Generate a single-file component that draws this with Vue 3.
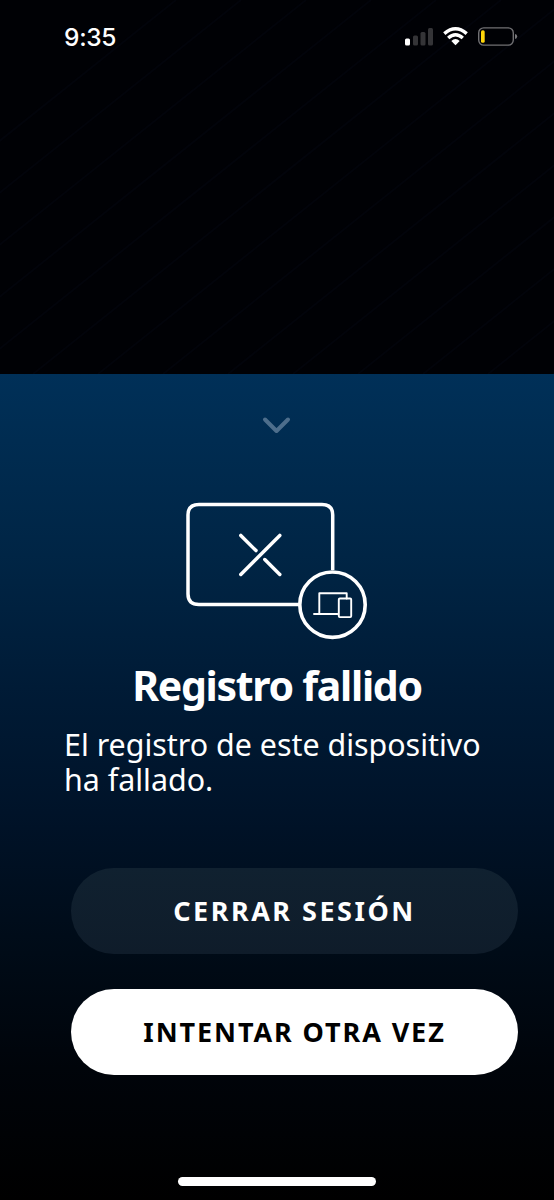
<script setup>
const stripes = Array.from({ length: 17 }, (_, i) => -292 + i * 65)
</script>

<template>
  <main class="screen">
    <section class="backdrop">
      <svg class="stripes" viewBox="0 0 554 374" aria-hidden="true">
        <path v-for="x in stripes" :key="x" :d="`M${x} 374L${x + 468} 0`" />
      </svg>
      <header class="status">
        <span class="time">9:35</span>
        <svg class="signals" width="114" height="22" viewBox="0 0 114 22" aria-hidden="true">
          <rect x="1" y="12.5" width="5" height="7" rx="1.5" fill="#fff" />
          <rect x="9" y="9.5" width="5" height="10" rx="1.5" fill="#343437" />
          <rect x="16.5" y="6" width="5" height="13.5" rx="1.5" fill="#343437" />
          <rect x="24" y="2" width="5" height="17.5" rx="1.5" fill="#343437" />
          <g fill="none" stroke="#fff" stroke-width="3.4">
            <path d="M40.3 7.6Q51.5-2.2 62.7 7.6" />
            <path d="M44.2 12Q51.5 5.5 58.8 12" />
          </g>
          <path d="M47.3 15Q51.5 11.2 55.7 15L51.5 19.2Z" fill="#fff" />
          <rect x="74.7" y="1.9" width="34.6" height="17.2" rx="5" fill="none" stroke="#707073" stroke-width="1.4" />
          <rect x="77" y="4.2" width="3.7" height="12.6" rx="1.6" fill="#ffd60a" />
          <path d="M111 8Q113.2 8.4 113.2 10.5Q113.2 12.6 111 13Z" fill="#77777a" />
        </svg>
      </header>
    </section>

    <section class="sheet">
      <svg class="chevron" width="30" height="20" viewBox="0 0 30 20" aria-label="Cerrar">
        <path d="M3 4.5L14.5 16L26 4.5" />
      </svg>
      <svg class="device" width="184" height="140" viewBox="0 0 184 140" aria-hidden="true">
        <g fill="none" stroke="#fff" stroke-linecap="round" stroke-linejoin="round">
          <path d="M114 104.6H14Q3 104.6 3 94.1V15Q3 4.4 14 4.4H137Q147.7 4.4 147.7 15V70" stroke-width="3.5" stroke-linecap="butt" />
          <circle cx="147.5" cy="104.7" r="32.7" stroke-width="3.6" />
          <path d="M55.8 74.4L94.8 35.4M55.8 35.4L71 50.6M79.8 59.6L94.8 74.4" stroke-width="3.5" />
          <g stroke-width="1.9">
            <path d="M129 114H152.5M134.3 114V93.3H161.7V98.5" />
            <rect x="153.8" y="98.5" width="12.4" height="18.6" rx="1" />
          </g>
        </g>
      </svg>
      <h1>Registro fallido</h1>
      <p>El registro de este dispositivo<br />ha fallado.</p>
      <div class="actions">
        <button class="logout">CERRAR SESIÓN</button>
        <button class="retry">INTENTAR OTRA VEZ</button>
      </div>
      <div class="home"></div>
    </section>
  </main>
</template>

<style>
body {
  margin: 0;
  background: #000;
}
</style>

<style scoped>
.screen {
  width: 554px;
  height: 1200px;
  overflow: hidden;
  display: flex;
  flex-direction: column;
  color: #fff;
  font-family: "Noto Sans", sans-serif;
}
.backdrop {
  position: relative;
  height: 374px;
  flex: none;
  background: #000105;
}
.stripes {
  position: absolute;
  inset: 0;
  width: 554px;
  height: 374px;
  fill: none;
  stroke: #02040b;
  stroke-width: 2;
}
.status {
  position: relative;
  display: flex;
  justify-content: space-between;
  padding: 26px 36px 0 64px;
}
.time {
  font: 500 24.5px/22px Inter, sans-serif;
  letter-spacing: -0.3px;
}
.signals {
  display: block;
}
.sheet {
  flex: 1;
  display: flex;
  flex-direction: column;
  align-items: center;
  background: linear-gradient(#003058 0%, #002545 22%, #001b36 38%, #001329 53%, #000c19 68%, #00040a 84%, #000 100%);
}
.chevron {
  margin-top: 41px;
  fill: none;
  stroke: #4d6e8c;
  stroke-width: 4;
  stroke-linecap: round;
  stroke-linejoin: round;
}
.device {
  margin-top: 65px;
}
h1 {
  margin: 15px 0 0;
  font-size: 41px;
  line-height: 60px;
  font-weight: 700;
  letter-spacing: -1.3px;
  white-space: nowrap;
}
p {
  align-self: stretch;
  margin: 12px 0 0 64px;
  font-size: 30.4px;
  line-height: 35px;
  white-space: nowrap;
}
.actions {
  align-self: stretch;
  display: flex;
  flex-direction: column;
  gap: 35px;
  margin: 71px 36px 0 71px;
}
button {
  height: 86px;
  padding: 0;
  border: 0;
  border-radius: 43px;
  color: #fff;
  font: 700 27px/86px "Noto Sans", sans-serif;
  letter-spacing: 2.5px;
  white-space: nowrap;
}
.logout {
  background: linear-gradient(#102130, #0f1c2a);
}
.retry {
  background: #fff;
  color: #000;
  letter-spacing: 1.9px;
}
.home {
  width: 198px;
  height: 9px;
  margin-top: 102px;
  border-radius: 5px;
  background: #fff;
}
</style>
